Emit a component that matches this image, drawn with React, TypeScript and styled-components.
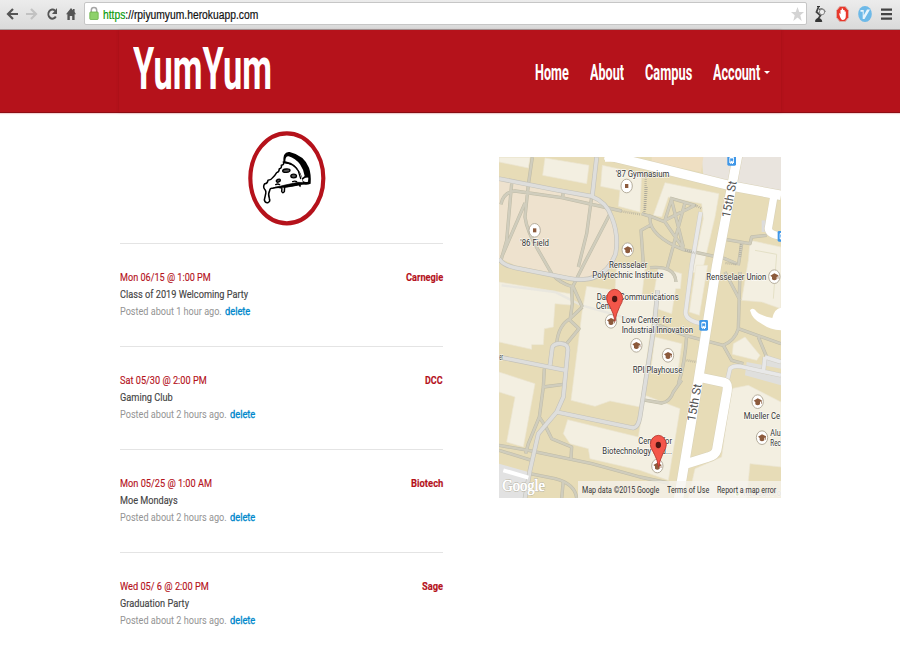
import React, { useLayoutEffect, useRef } from "react";
import styled, { createGlobalStyle } from "styled-components";

const GlobalStyle = createGlobalStyle`
  * { box-sizing: border-box; }
  body { margin: 0; background: #fff; font-family: Roboto, sans-serif; overflow: hidden; }
`;

const Page = styled.div`
  width: 900px;
  height: 650px;
  overflow: hidden;
  background: #fff;
`;

/* Condensed text: glyphs are narrowed to the given width. */
const FitBox = styled.span<{ $w: number }>`
  display: inline-block;
  width: ${(p) => p.$w}px;
  white-space: nowrap;
  vertical-align: top;
`;
const FitInner = styled.span`
  display: inline-block;
  transform-origin: 0 50%;
`;

function Fit({ w, children }: { w: number; children: React.ReactNode }) {
  const ref = useRef<HTMLSpanElement>(null);
  useLayoutEffect(() => {
    const el = ref.current;
    if (el) el.style.transform = `scaleX(${w / el.offsetWidth})`;
  }, [w]);
  return (
    <FitBox $w={w}>
      <FitInner ref={ref}>{children}</FitInner>
    </FitBox>
  );
}

/* ---------- browser toolbar ---------- */
const Toolbar = styled.div`
  height: 30px;
  display: flex;
  align-items: center;
  padding: 0 5px 2px 6px;
  background: linear-gradient(#ececec, #dadada);
  border-bottom: 1px solid #a89c9c;
`;
const NavIcons = styled.div`
  display: flex;
  align-items: center;
  gap: 6px;
  width: 78px;
`;
const AddressBar = styled.div`
  width: 723px;
  height: 23px;
  display: flex;
  align-items: center;
  padding: 0 2px 0 4px;
  background: #fff;
  border: 1px solid #c6c6c6;
  border-radius: 2px;
`;
const Url = styled.div`
  flex: 1;
  margin-left: 4px;
  padding-top: 2px;
  font: 12.5px/20px "Liberation Sans", Arial, sans-serif;
  color: #111;
  -webkit-text-stroke: 0.2px currentColor;
`;
const Secure = styled.span`
  color: #0a9a0a;
`;
const Extensions = styled.div`
  display: flex;
  align-items: center;
  gap: 8px;
  margin-left: 6px;
`;

/* ---------- site header ---------- */
const Header = styled.header`
  height: 83px;
  background: #b5121b;
  border-bottom: 1px solid #8d0d14;
  box-shadow: 0 1px 1px rgba(181, 18, 27, 0.18);
`;
const HeaderInner = styled.div`
  width: 662px;
  height: 82px;
  margin-left: 119px;
  padding: 0 11px 0 14px;
  display: flex;
  justify-content: space-between;
  box-shadow: 0 0 3px rgba(90, 0, 0, 0.2);
`;
const Brand = styled.div`
  color: #fff;
  font-size: 59px;
  font-weight: 700;
  line-height: 77px;
`;
const Menu = styled.nav`
  display: flex;
  gap: 21px;
  padding-top: 2px;
  color: #fff;
  font-size: 21.5px;
  font-weight: 700;
  line-height: 85px;
`;
const MenuItem = styled.div`
  display: flex;
  align-items: center;
`;
const Caret = styled.span`
  margin-left: 4px;
  border: 3px solid transparent;
  border-top: 3px solid #fff;
  border-bottom: 0;
`;

/* ---------- content ---------- */
const Content = styled.main`
  display: flex;
  gap: 56px;
  margin-left: 119px;
`;
const Feed = styled.section`
  width: 324px;
  padding-left: 0.5px;
`;
const LogoWrap = styled.div`
  height: 130px;
  display: flex;
  justify-content: center;
  padding: 18px 0 0 12px;
`;
const Event = styled.article`
  height: 103px;
  border-top: 1px solid #e4e4e4;
  padding-top: 25px;
  font-size: 11.5px;
  line-height: 17px;
  color: #444;
`;
const EventHead = styled.div`
  display: flex;
  justify-content: space-between;
  color: #b5121b;
  -webkit-text-stroke: 0.15px currentColor;
`;
const Place = styled.div`
  font-weight: 700;
`;
const Line = styled.div`
  height: 17px;
  -webkit-text-stroke: 0.15px currentColor;
`;
const Posted = styled.div`
  display: flex;
  gap: 3px;
  color: #939393;
`;
const Delete = styled.a`
  color: #0088cc;
  -webkit-text-stroke: 0.35px currentColor;
`;

const MapFrame = styled.section`
  position: relative;
  width: 282px;
  height: 341px;
  margin-top: 44px;
`;
const MapFooter = styled.div`
  position: absolute;
  right: 0;
  bottom: 0;
  width: 203px;
  height: 17px;
  padding: 0 5px 0 4px;
  display: flex;
  justify-content: space-between;
  background: rgba(245, 243, 238, 0.75);
  color: #333;
  font-size: 9.5px;
  line-height: 18px;
`;

const events = [
  { date: "Mon 06/15 @ 1:00 PM", dw: 91, place: "Carnegie", pw: 37, title: "Class of 2019 Welcoming Party", tw: 128, ago: "Posted about 1 hour ago.", aw: 102 },
  { date: "Sat 05/30 @ 2:00 PM", dw: 87, place: "DCC", pw: 18, title: "Gaming Club", tw: 53, ago: "Posted about 2 hours ago.", aw: 107 },
  { date: "Mon 05/25 @ 1:00 AM", dw: 92, place: "Biotech", pw: 32, title: "Moe Mondays", tw: 58, ago: "Posted about 2 hours ago.", aw: 107 },
  { date: "Wed 05/ 6 @ 2:00 PM", dw: 89, place: "Sage", pw: 21, title: "Graduation Party", tw: 69, ago: "Posted about 2 hours ago.", aw: 107 },
];

function ToolbarIcons() {
  return (
    <NavIcons>
      <svg width="14" height="16" viewBox="0 0 14 16" fill="none" stroke="#555" strokeWidth="2.200">
        <path d="M12 8H2M7 3L2 8l5 5" />
      </svg>
      <svg width="14" height="16" viewBox="0 0 14 16" fill="none" stroke="#c2c2c2" strokeWidth="2.200">
        <path d="M0 8h10M5 3l5 5-5 5" />
      </svg>
      <svg width="13" height="16" viewBox="0 0 13 16">
        <path d="M9.8 10.5A4 4.6 0 1 1 9 4.6" fill="none" stroke="#555" strokeWidth="2" />
        <path d="M11 2v6H6z" fill="#555" />
      </svg>
      <svg width="12" height="16" viewBox="0 0 12 16" fill="#555">
        <path d="M6 2L1 8.2h1.400V14h2.400v-4h2.400v4h2.400V8.200h1.400L9.600 6V3H8v1.300z" />
      </svg>
    </NavIcons>
  );
}

function ExtensionIcons() {
  return (
    <Extensions>
      <svg width="14" height="18" viewBox="0 0 14 18">
        <path d="M5.500 2L3.500 7l4 3.500L5 14" fill="none" stroke="#444" strokeWidth="1.800" />
        <path d="M6 4.500Q11 3 12 7" fill="none" stroke="#555" strokeWidth="1.500" />
        <ellipse cx="9" cy="7" rx="2.600" ry="2.800" fill="#eee" stroke="#888" />
        <path d="M4 1.500h3M2.500 16.500q0-3 3-3t3.300 3z" fill="#333" stroke="#333" />
      </svg>
      <svg width="15" height="18" viewBox="0 0 15 18">
        <path d="M4.800 1.500h5.400L13.500 5.500v7l-3.300 4H4.800L1.500 12.500V5.500z" fill="#e8382c" stroke="#dcaaa4" />
        <path d="M4 8l1.500 1V5h1.200V3.500h1.400V5h1.500v1.500h1.200V11q0 4-3.300 4Q5.500 15 4 8z" fill="#fff" />
      </svg>
      <svg width="14" height="18" viewBox="0 0 14 18">
        <ellipse cx="7" cy="9" rx="6.800" ry="8" fill="#6db9e8" />
        <path d="M2.500 5h3.200v5.500L9 4.500h3L6.500 14H4.700V6.800H2.500z" fill="#e8f4fc" />
      </svg>
      <svg width="12" height="18" viewBox="0 0 12 18" fill="#444">
        <path d="M1 3.500h11v2.200H1zM1 8h11v2.200H1zM1 12.500h11v2.200H1z" />
      </svg>
    </Extensions>
  );
}

function PizzaLogo() {
  return (
    <svg width="78" height="95" viewBox="56 35 234 285">
      <ellipse cx="172.500" cy="177" rx="109.500" ry="135" fill="#fff" stroke="#b5121b" strokeWidth="12.500" />
      <g fill="none" stroke="#000" strokeLinejoin="round" strokeLinecap="round">
        <path d="M162 130Q160 95 181 98Q224 108 239 145Q246 165 244 193Q232 198 222 195L217 174Q206 146 190 137Z" fill="#000" stroke="none" />
        <path d="M168 126Q168 110 178 111Q198 117 212 135Q223 151 226 170L219 176Q208 141 184 130Z" fill="#fff" stroke="none" />
        <path d="M220 181Q228 173 237 175L236 187Q228 190 222 186Z" fill="#fff" stroke="none" />
        <path d="M162 128Q166 136 156 138Q158 147 150 148Q150 157 142 160Q137 169 129 176Q126 182 116 183Q114 194 106 193Q100 203 106 210Q112 216 108 228L105 242Q108 252 116 250Q124 246 120 237Q115 225 121 214Q122 205 130 207Q145 202 155 205Q159 204 157 216Q160 224 165 217L166 202Q180 201 204 196" strokeWidth="4.500" />
        <path d="M164 130Q193 132 207 155L214 178" strokeWidth="4" />
        <path d="M134 205Q166 197 206 189L242 191L214 196L213 202Q209 201 208 197Q188 201 168 204Z" fill="#000" strokeWidth="2" />
        <ellipse cx="171" cy="154" rx="11" ry="5" fill="#555" strokeWidth="4" transform="rotate(-5 171 154)" />
        <ellipse cx="193" cy="170" rx="8.500" ry="5.500" fill="#555" strokeWidth="4" />
        <ellipse cx="147" cy="184" rx="6.500" ry="4" fill="#555" strokeWidth="4" transform="rotate(-25 147 184)" />
        <path d="M139 196q7-4 12 0M190 187q7-3 12 0" strokeWidth="4" />
      </g>
    </svg>
  );
}

/* ---------- campus map ---------- */
const buildings = [
  "12,21 105,21 100,53 12,35",
  "150,23 282,45 275,100 143,75",
  "322,45 440,70 435,185 370,168 375,120 317,108",
  "510,97 672,130 660,200 620,370 592,366 625,205 620,160 520,140 500,200 475,195",
  "603,345 638,345 613,495 583,485",
  "765,270 858,290 858,475 800,455 740,450 760,330",
  "490,350 560,370 556,415 542,415 530,490 470,470",
  "480,560 560,580 548,670 468,655",
  "715,580 750,560 795,615 785,630 712,612",
  "275,408 360,420 480,445 435,770 345,752 300,768 228,750 262,480",
  "12,395 225,430 235,465 180,460 175,530 148,535 145,583 110,583 110,597 12,575",
  "12,665 120,700 85,890 35,875 60,740 12,725",
  "218,808 430,860 450,735 555,775 520,990 435,960 285,925 280,895 225,880 205,850",
  "708,715 760,705 858,755 858,950 765,940 755,1044 580,1044 600,955 680,920",
  "365,345 450,352 440,445 360,420",
];

const footpaths =
  "M18 162Q25 125 60 122L200 142L380 182M112 21L100 103L90 200Q95 240 130 300L170 370Q195 400 235 410L262 470" +
  "M50 100L35 270L18 330M90 158L20 320M205 118L203 143M290 140L275 250L250 350M345 190L265 345L230 415L232 460L225 510L252 535L215 580" +
  "M262 470L225 505Q190 525 185 580M148 655L145 710L133 800L100 880L92 910M12 885L100 900L290 940L435 980L520 998" +
  "M133 800Q155 830 170 865L230 890L228 925M145 710L205 702M12 900L110 930M105 970L180 985Q240 1000 245 1044M205 990L200 1044" +
  "M440 190L465 198M525 143L600 165L510 210L530 145M570 157L515 360M530 150L565 290M460 195L510 215L565 295M465 200Q460 255 565 298L690 325L725 340M465 225L438 240L445 340" +
  "M695 268L765 280L770 260L815 255M740 280L730 345M478 520L570 555L685 585Q720 570 730 535L735 365M690 365L735 450M730 535L858 580M685 585L710 630L745 640" +
  "M575 555Q570 640 550 700M790 560L815 620M440 748L500 758Q525 755 535 725L560 690M465 352Q540 345 543 395";

const roads =
  "M12 85L180 118L290 138Q335 155 350 200Q372 255 362 310Q345 360 300 380Q270 393 220 384L60 352Q25 345 12 325" +
  "M305 21L292 135M165 645L172 590Q180 578 200 580Q222 582 218 605L205 740L185 785L130 850L105 960L90 1044" +
  "M12 620L210 660M185 785L415 833Q430 830 435 800L478 525L488 420";

const serviceRoads =
  "M617 185L590 345L572 485Q570 510 620 520M697 690L705 655Q715 645 735 648L858 675M810 620L805 665M810 620L858 635";

const streets =
  "M330 14L480 50L700 105L858 135M728 15L665 345L610 690L550 1050M610 680L690 697Q702 700 694 735L665 900Q660 915 640 920L575 940";

const labels: [string, number, number, number][] = [
  ["'87 Gymnasium", 362, 523, 80],
  ["'86 Field", 76, 162, 288],
  ["Rensselaer", 342, 457, 353],
  ["Polytechnic Institute", 292, 505, 384],
  ["Darrin Communications", 305, 551, 448],
  ["Center", 303, 368, 477],
  ["Low Center for", 380, 531, 519],
  ["Industrial Innovation", 380, 594, 549],
  ["RPI Playhouse", 413, 562, 668],
  ["Rensselaer Union", 634, 814, 388],
  ["Center for", 430, 531, 881],
  ["Biotechnology and...", 322, 531, 911],
  ["Mueller Ce", 746, 855, 807],
  ["Alu", 826, 857, 857],
  ["Rec", 826, 857, 887],
  ["er", 13, 24, 628],
];

const schools = [
  [398, 298], [348, 513], [424, 585], [519, 615], [838, 379], [788, 754], [801, 862], [487, 947],
];
const places = [[395, 107], [119, 240]];
const stops = [[710, 30], [626, 525], [861, 258]];
const pins = [[359, 449], [490, 887]];

function CampusMap() {
  return (
    <svg width="282" height="341" viewBox="12 20 846 1023" preserveAspectRatio="none">
      <rect x="12" y="20" width="846" height="1024" fill="#e7dcb7" />
      <path d="M620 20H858V130L625 75Z" fill="#e9e4de" />
      <path d="M470 20H625L618 65L470 35Z" fill="#efdfc2" />
      <path d="M12 88L290 138L345 185L365 250L358 320L330 365L270 388L60 345L12 322Z" fill="#eee2ce" />
      <path d="M12 940L100 965L90 1044H12Z" fill="#e2e2e2" />
      <path d="M755 635L858 655V705L750 675ZM805 670L858 680V640L815 625Z" fill="#dfdfdd" />
      <path d="M800 210h18v35h-18z" fill="#dcdcdc" />
      <g fill="#f3efe1" stroke="#ebe5d2" strokeWidth="2">
        {buildings.map((b) => (
          <polygon key={b} points={b} />
        ))}
      </g>
      <path d="M780 300L845 312L835 445" fill="none" stroke="#e4e0c6" strokeWidth="3" />
      <path d="M20 405L180 425L260 465L420 510" fill="none" stroke="#e6e5df" strokeWidth="7" opacity=".8" />
      <g fill="none" strokeLinejoin="round">
        <path d={footpaths} stroke="#bfbba6" strokeWidth="10" />
        <path d={footpaths} stroke="#d0cdbd" strokeWidth="7" />
        <path d={roads} stroke="#c3c1b8" strokeWidth="14" />
        <path d={roads} stroke="#dededc" strokeWidth="10.500" />
        <path d={serviceRoads} stroke="#cfcdc5" strokeWidth="14" />
        <path d={serviceRoads} stroke="#e8e8e8" strokeWidth="11" />
        <path d={streets} stroke="#d9d2b8" strokeWidth="31" />
        <path d="M838 135L820 235Q822 255 866 258" stroke="#d9d2b8" strokeWidth="25" />
        <path d="M838 130L820 235Q822 255 866 258" stroke="#fff" strokeWidth="22" />
        <path d={streets} stroke="#fff" strokeWidth="28" />
        <path d="M25 960L100 982" stroke="#fff" strokeWidth="12" />
        <path d="M380 183L435 192M453 75L448 190M455 110L450 180M570 300L600 308M600 165L622 175M738 282L735 320M692 338L725 342M575 630L605 635" stroke="#aaa79a" strokeWidth="7" strokeDasharray="2 4" />
      </g>
      <path d="M765 480Q770 472 780 478Q790 495 832 503Q838 475 858 472V540Q825 538 800 520Q772 508 765 480Z" fill="#fff" />
      <path d="M330 14L410 34H330Z" fill="#fff" />

      {stops.map(([x, y]) => (
        <g key={`${x}-${y}`} transform={`translate(${x} ${y})`}>
          <rect x="-13" y="-16" width="26" height="32" rx="4" fill="#3f97e8" />
          <path d="M-7-7Q-7-11 0-11T7-7V8H4V11H1V8H-1V11H-4V8H-7Z" fill="#fff" />
          <path d="M-4-5H4V1H-4ZM-5 4h3M2 4h3" fill="#3f97e8" stroke="#3f97e8" strokeWidth="1.500" />
        </g>
      ))}
      {[...schools, ...places].map(([x, y], i) => (
        <g key={`${x}-${y}`} transform={`translate(${x} ${y})`}>
          <ellipse rx="17" ry="20.500" fill="#fff" stroke="#b5ad9c" strokeWidth="3" />
          {i < schools.length ? (
            <path d="M0-10L12-4V6H10V-1L7 1V8Q0 14-7 8V1L-12-3Z" fill="#8c5a3c" />
          ) : (
            <rect x="-5" y="-6" width="10" height="12" fill="#8c5a3c" />
          )}
        </g>
      ))}
      <g fontFamily="Roboto, sans-serif" fontSize="27.500" fill="#333" stroke="#fff" strokeWidth="4" strokeOpacity=".75" paintOrder="stroke">
        {labels.map(([text, x0, x1, y]) => (
          <text key={text + y} x={x0} y={y} textLength={x1 - x0} lengthAdjust="spacingAndGlyphs">
            {text}
          </text>
        ))}
        <text x="745" y="1038" fill="#999" fillOpacity=".8" textLength="113" lengthAdjust="spacingAndGlyphs">Robison Po</text>
        <text transform="translate(704 204) rotate(-79)" fontSize="36" fill="#555" textLength="112" lengthAdjust="spacingAndGlyphs">15th St</text>
        <text transform="translate(600 815) rotate(-80)" fontSize="36" fill="#555" textLength="114" lengthAdjust="spacingAndGlyphs">15th St</text>
      </g>
      <circle cx="727" cy="1032" r="9" fill="#fff" />
      <circle cx="727" cy="1032" r="4" fill="#8cc152" />
      {pins.map(([x, y]) => (
        <g key={x} transform={`translate(${x} ${y})`}>
          <path d="M1 64Q-2 42-14 20Q-24 6-24-4A24 28 0 0 1 24-4Q24 6 15 20Q4 42 1 64Z" fill="#f4564a" stroke="#b3352c" strokeWidth="2.500" />
          <ellipse cy="-3" rx="8" ry="9.500" fill="#4e1612" />
        </g>
      ))}
      <text x="22" y="1022" fontFamily="Liberation Serif, serif" fontSize="52" fill="#fff" stroke="#b3ae9c" strokeWidth="4" paintOrder="stroke" textLength="128" lengthAdjust="spacingAndGlyphs">
        Google
      </text>
      <text x="22" y="1022" fontFamily="Liberation Serif, serif" fontSize="52" fill="#fff" stroke="#fff" strokeWidth="1.500" textLength="128" lengthAdjust="spacingAndGlyphs" aria-hidden="true">
        Google
      </text>
    </svg>
  );
}

export default function App() {
  return (
    <Page>
      <GlobalStyle />
      <Toolbar>
        <ToolbarIcons />
        <AddressBar>
          <svg width="10" height="15" viewBox="0 0 10 15">
            <path d="M2.300 7V4.200Q2.300 1.500 5 1.500T7.700 4.200V7" fill="none" stroke="#a5a5a5" strokeWidth="1.500" />
            <rect x=".8" y="6" width="8.400" height="7.500" rx=".8" fill="#8ed16b" stroke="#6ab348" strokeWidth=".8" />
          </svg>
          <Url>
            <Fit w={155}>
              <Secure>https</Secure>://rpiyumyum.herokuapp.com
            </Fit>
          </Url>
          <svg width="13" height="16" viewBox="0 0 13 16">
            <path d="M6.500 1L8.300 6H13L9.300 9.300L10.700 15L6.500 11.600L2.300 15L3.700 9.300L0 6H4.700Z" fill="#d4d4d4" />
          </svg>
        </AddressBar>
        <ExtensionIcons />
      </Toolbar>
      <Header>
        <HeaderInner>
          <Brand>
            <Fit w={139}>YumYum</Fit>
          </Brand>
          <Menu>
            <MenuItem><Fit w={34}>Home</Fit></MenuItem>
            <MenuItem><Fit w={34}>About</Fit></MenuItem>
            <MenuItem><Fit w={47}>Campus</Fit></MenuItem>
            <MenuItem><Fit w={47}>Account</Fit><Caret /></MenuItem>
          </Menu>
        </HeaderInner>
      </Header>
      <Content>
        <Feed>
          <LogoWrap>
            <PizzaLogo />
          </LogoWrap>
          {events.map((e) => (
            <Event key={e.date}>
              <EventHead>
                <Fit w={e.dw}>{e.date}</Fit>
                <Place><Fit w={e.pw}>{e.place}</Fit></Place>
              </EventHead>
              <Line><Fit w={e.tw}>{e.title}</Fit></Line>
              <Posted>
                <Fit w={e.aw}>{e.ago}</Fit>
                <Delete><Fit w={25}>delete</Fit></Delete>
              </Posted>
            </Event>
          ))}
        </Feed>
        <MapFrame>
          <CampusMap />
          <MapFooter>
            <Fit w={77}>Map data ©2015 Google</Fit>
            <Fit w={42}>Terms of Use</Fit>
            <Fit w={59}>Report a map error</Fit>
          </MapFooter>
        </MapFrame>
      </Content>
    </Page>
  );
}
